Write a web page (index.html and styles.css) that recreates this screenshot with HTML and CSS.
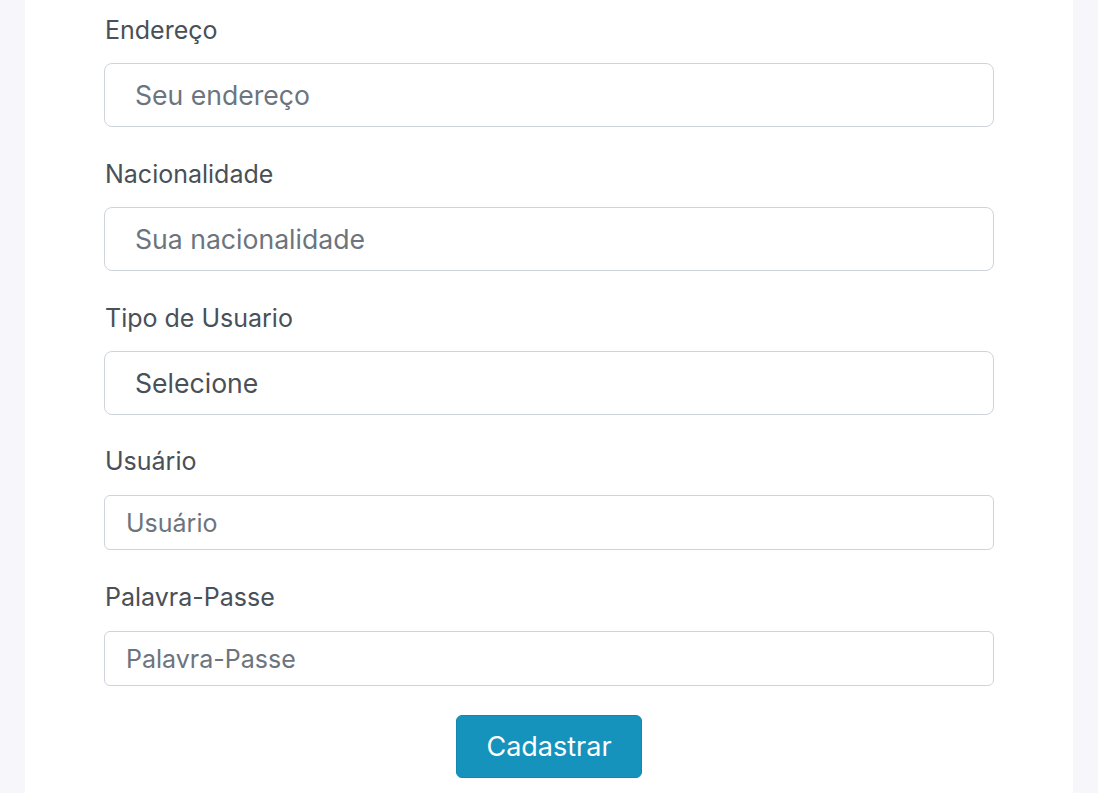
FILE: index.html
```html
<!DOCTYPE html>
<html lang="pt">
<head>
<meta charset="utf-8">
<title>Cadastro</title>
<link rel="stylesheet" href="styles.css">
</head>
<body>
<div class="card">
  <form class="form">
    <div class="group">
      <label class="label" for="end">Endereço</label>
      <input class="input input-lg" id="end" type="text" placeholder="Seu endereço">
    </div>
    <div class="group">
      <label class="label" for="nac">Nacionalidade</label>
      <input class="input input-lg" id="nac" type="text" placeholder="Sua nacionalidade">
    </div>
    <div class="group group-select">
      <label class="label" for="tipo">Tipo de Usuario</label>
      <select class="input input-lg select" id="tipo">
        <option>Selecione</option>
      </select>
    </div>
    <div class="group group-sm">
      <label class="label" for="usr">Usuário</label>
      <input class="input input-sm" id="usr" type="text" placeholder="Usuário">
    </div>
    <div class="group group-sm group-last">
      <label class="label" for="pw">Palavra-Passe</label>
      <input class="input input-sm" id="pw" type="password" placeholder="Palavra-Passe">
    </div>
    <div class="actions">
      <button class="btn" type="button">Cadastrar</button>
    </div>
  </form>
</div>
</body>
</html>
```
FILE: styles.css
```css
html, body {
  margin: 0;
  padding: 0;
  background: #f6f6fb;
  font-family: Inter, "Noto Sans", sans-serif;
}
.card {
  margin: 0 25px;
  background: #ffffff;
  padding: 14px 79px 20px;
  min-height: 793px;
  box-sizing: border-box;
}
.form {
  display: flex;
  flex-direction: column;
}
.group {
  display: flex;
  flex-direction: column;
  margin-bottom: 31px;
}
.group-select {
  margin-bottom: 30px;
}
.group-sm {
  margin-bottom: 31px;
}
.group-last {
  margin-bottom: 29px;
}
.label {
  display: block;
  font-size: 25px;
  line-height: 32px;
  color: #495057;
  margin-bottom: 17px;
  padding-left: 1px;
}
.group-sm .label {
  margin-bottom: 18px;
}
.input {
  display: block;
  width: 100%;
  box-sizing: border-box;
  border: 1px solid #ced4da;
  border-radius: 8px;
  background: #fff;
  font-family: Inter, "Noto Sans", sans-serif;
  color: #495057;
  outline: none;
  margin: 0;
}
.input::placeholder {
  color: #6c757d;
  opacity: 1;
}
.input-lg {
  height: 64px;
  padding: 0 30px;
  font-size: 26.6px;
}
.select {
  appearance: none;
  -webkit-appearance: none;
  color: #495057;
}
.input-sm {
  height: 55px;
  padding: 0 21px;
  font-size: 25px;
  border-radius: 6px;
}
.actions {
  display: flex;
  justify-content: center;
}
.btn {
  width: 186px;
  height: 63px;
  background: #1593bd;
  border: 1px solid #1288b0;
  border-radius: 6px;
  color: #ffffff;
  font-family: Inter, "Noto Sans", sans-serif;
  font-size: 27px;
  cursor: pointer;
}
```
